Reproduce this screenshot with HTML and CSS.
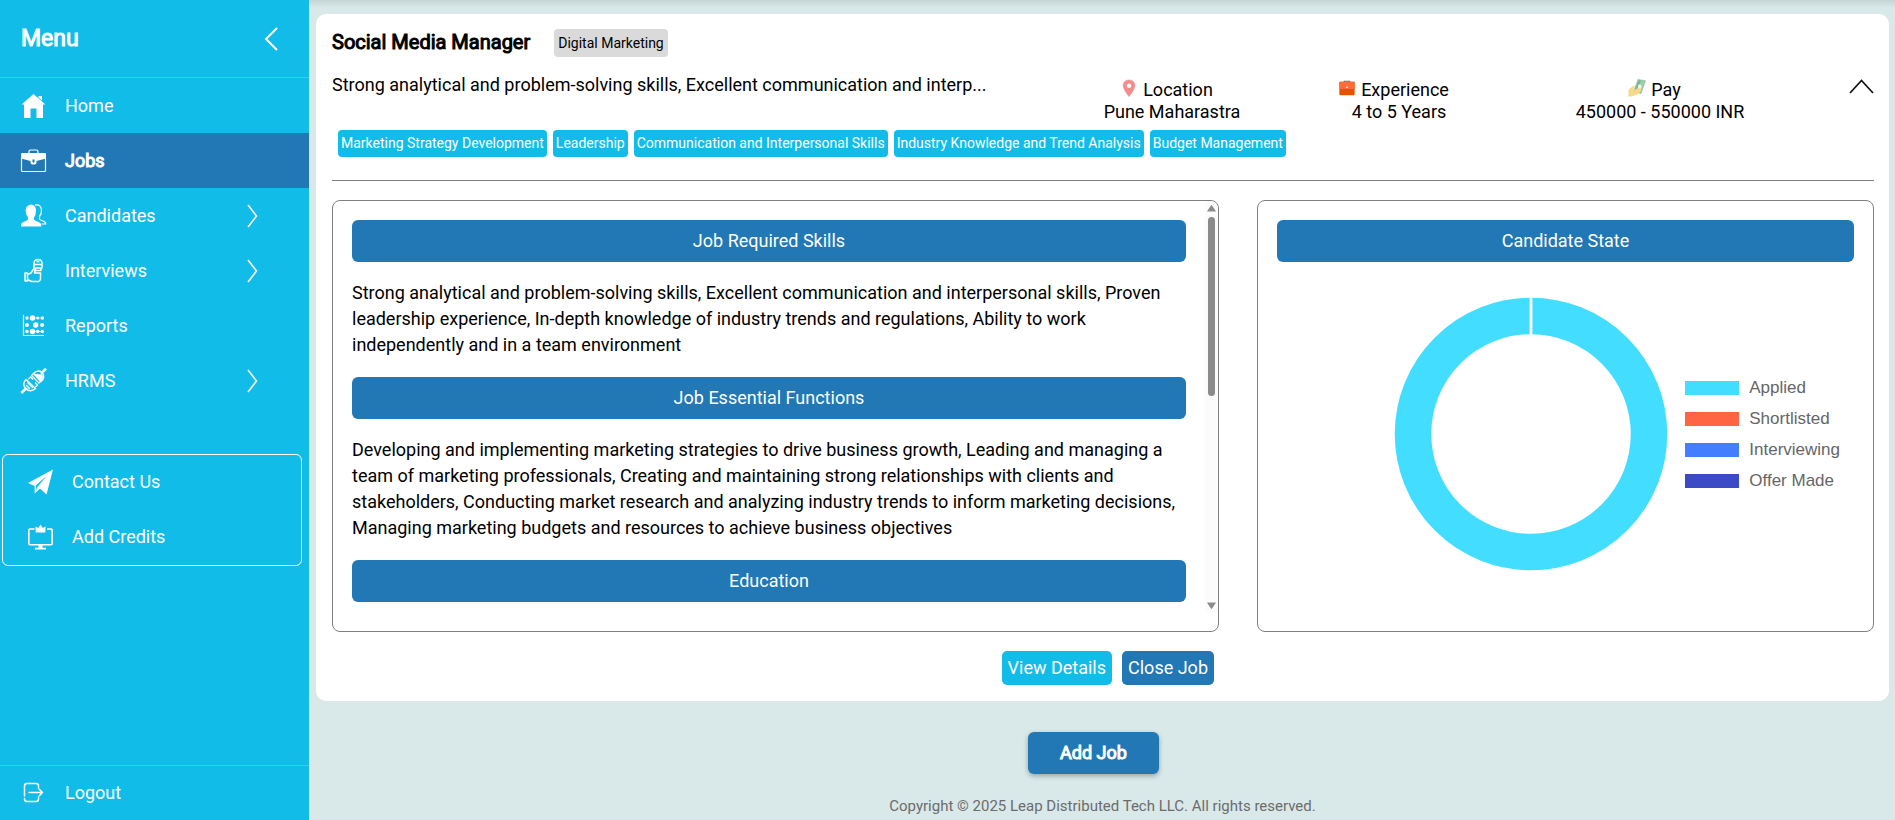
FILE: index.html
```html
<!DOCTYPE html>
<html lang="en">
<head>
<meta charset="utf-8">
<title>Jobs</title>
<link rel="stylesheet" href="styles.css">
</head>
<body>
<div class="app">
  <aside class="sidebar">
    <div class="sidebar-head">
      <h1 class="menu-title">Menu</h1>
      <button class="icon-btn" type="button" aria-label="Collapse menu">
        <svg width="14" height="24" viewBox="0 0 14 24" fill="none" stroke="#fff" stroke-width="2"><path d="M13 1 2 12l11 11"/></svg>
      </button>
    </div>
    <nav class="nav">
      <a class="nav-item" href="#">
        <svg class="nav-icon" viewBox="0 0 26 26" fill="#fff"><path d="M13 1 25 11.5H22.500V25H16V15.500H10V25H3.500V11.500H1Z"/><path d="M18 4.500V3h3.500v4.500Z"/></svg>
        <span>Home</span>
      </a>
      <a class="nav-item active" href="#">
        <svg class="nav-icon" viewBox="0 0 26 26" fill="none" stroke="#fff"><path d="M8.500 5V3.500Q8.500 2 10 2h6q1.500 0 1.500 1.500V5" stroke-width="1.200"/><path d="M1.500 5h23q1 0 1 1v4.500L16 13v1.500q0 2-3 2t-3-2V13L.5 10.500V6q0-1 1-1Z" fill="#fff" stroke="none"/><path d="M12 11.500h2v2.500l-1 1-1-1Z" fill="#2178b5" stroke="none"/><path d="M1 10v12.500q0 1 1 1h22q1 0 1-1V10" stroke-width="1.200"/></svg>
        <span>Jobs</span>
      </a>
      <a class="nav-item" href="#">
        <svg class="nav-icon" viewBox="0 0 26 26"><path d="M.5 23.500v-2q.5-2 3.500-3t3.500-2v-2Q5.500 12 5.200 8.500 5 2 10.500 1.500 15.500 2 15.500 7.500 15.500 12 13.500 14.500v2q1 1.200 4 2.200t3.300 3v1.800Z" fill="#fff"/><path d="M14.500 2.200q6-1.500 6.500 4.800.2 4-2 6.500v2.500q.8 1.200 3.500 2t2.700 3h-4" fill="none" stroke="#fff" stroke-width="1.200"/></svg>
        <span>Candidates</span>
        <svg class="chevron" viewBox="0 0 11 24" fill="none" stroke="#fff" stroke-width="1.600"><path d="m1 1 8.500 11L1 23"/></svg>
      </a>
      <a class="nav-item" href="#">
        <svg class="nav-icon" viewBox="0 0 26 26" fill="none" stroke="#fff" stroke-width="1.500" stroke-linejoin="round"><path d="M13.500 10V5.500q0-4 4-4t4 4V10Z"/><path d="M13.500 6.500h8M14.500 10v2.500h6V10M16 3.500h3"/><path d="M4.500 15H7v8H4.500ZM7 16.500l3.500-1.500 2.500-4q1.500-1 2 .5l-1 3.500h6v6q-.3 2-2 2.500h-7L7 21.500"/></svg>
        <span>Interviews</span>
        <svg class="chevron" viewBox="0 0 11 24" fill="none" stroke="#fff" stroke-width="1.600"><path d="m1 1 8.500 11L1 23"/></svg>
      </a>
      <a class="nav-item" href="#">
        <svg class="nav-icon" viewBox="0 0 26 26" fill="#fff"><path d="M3 2v20.500H23.500" fill="none" stroke="#fff" stroke-width="1.200"/><path d="M11.500 5h10M11.500 18.500h10" stroke="#fff" stroke-width=".6"/><circle cx="6.500" cy="5" r="1.700"/><circle cx="12" cy="5" r="2.700"/><circle cx="17.200" cy="5" r="1.500"/><circle cx="21.800" cy="5" r="1.700"/><circle cx="6.500" cy="12" r="2"/><circle cx="15.200" cy="12" r="2.700"/><circle cx="21.600" cy="12" r="2"/><circle cx="6.500" cy="18.500" r="1.700"/><circle cx="12" cy="18.500" r="2.700"/><circle cx="17.200" cy="18.500" r="1.700"/><circle cx="21.800" cy="18.500" r="1.700"/></svg>
        <span>Reports</span>
      </a>
      <a class="nav-item" href="#">
        <svg class="nav-icon" viewBox="0 0 26 26" fill="none" stroke="#fff" stroke-linejoin="round"><path d="M.8 25 6 20" stroke-width="2.500"/><path d="m20.500 5.500 5-4.800" stroke-width="2.500"/><path d="M5.500 11.500 15 20.500Q11 24 7 22L4 19q-2-3.500 1.500-7.500Z" stroke-width="1.500"/><path d="m7 14.500 5.500 5.500M5.500 17l4 4M8 11l2-2 2.500 2.500M15 19l2-2-2.500-2.500" stroke-width="1.300"/><path d="M13 5.500Q17 1.500 21 4l1.500 2Q24.500 10 20.500 13.500Z" stroke-width="1.500"/><path d="m14 6.500 7.500.5.500 4-1.500 2Z" fill="#fff"/><path d="m13 5.500-2 2 7.500 7.500 2-2" stroke-width="1.200"/></svg>
        <span>HRMS</span>
        <svg class="chevron" viewBox="0 0 11 24" fill="none" stroke="#fff" stroke-width="1.600"><path d="m1 1 8.500 11L1 23"/></svg>
      </a>
    </nav>
    <div class="support">
      <a class="nav-item" href="#">
        <svg class="nav-icon" viewBox="0 0 26 26" fill="#fff"><path d="M25.500.5 19 25.500l-6.500-6-5.300 5V17L.5 14Z"/><path d="M8.300 16.500 19.500 6.500 9.500 18.500l-1 3.500Z" fill="#12bce9"/></svg>
        <span>Contact Us</span>
      </a>
      <a class="nav-item" href="#">
        <svg class="nav-icon" viewBox="0 0 26 26" fill="#fff"><path d="M7 5H2.500Q1.300 5 1.300 6.200v13.300q0 1.200 1.200 1.200h21q1.200 0 1.200-1.200V6.200Q24.700 5 23.500 5H19.500" fill="none" stroke="#fff" stroke-width="1.600"/><path d="m8 2.500 2.800 1.500L13 .5 15.200 4 18 2.500 17.800 8.500H8.200ZM11 21h4v2.800h3.500v1.700h-11v-1.700H11Z"/></svg>
        <span>Add Credits</span>
      </a>
    </div>
    <a class="nav-item logout" href="#">
      <svg class="nav-icon" viewBox="0 0 26 26" fill="none" stroke="#fff" stroke-width="1.500" stroke-linecap="round" stroke-linejoin="round"><path d="M18 8V6q0-2.500-2.500-2.500h-9Q4 3.500 4 6v10M4 18.500v.5q0 2.500 2.500 2.500h9Q18 21.500 18 19v-2M8.500 12.500H22M18.800 9.200l3.200 3.300-3.200 3.300"/></svg>
      <span>Logout</span>
    </a>
  </aside>

  <main class="main">
    <article class="card">
      <header class="job-head">
        <h2 class="job-title">Social Media Manager</h2>
        <span class="category">Digital Marketing</span>
      </header>
      <div class="summary">
        <p class="excerpt">Strong analytical and problem-solving skills, Excellent communication and interp...</p>
        <div class="fact">
          <div class="fact-label">
            <svg class="fact-icon" viewBox="0 0 20 20"><path d="M10 1Q16.500 1.500 16.500 7.500 16 12 10 19.500 4 12 3.500 7.500 3.500 1.500 10 1Z" fill="#f78c8c" stroke="#e87575" stroke-width=".5"/><circle cx="10" cy="7.500" r="2.500" fill="#fff"/></svg>
            <span>Location</span>
          </div>
          <div>Pune Maharastra</div>
        </div>
        <div class="fact">
          <div class="fact-label">
            <svg class="fact-icon" viewBox="0 0 20 20"><path d="M7 4V2.500h6V4" fill="none" stroke="#666" stroke-width="1.300"/><rect x="1.500" y="3" width="17" height="15" rx="1" fill="#e65100"/><path d="M2.500 3h15q1 0 1 1v7h-17V4q0-1 1-1Z" fill="#ff6c3a"/><rect x="9" y="8.500" width="2" height="1.500" fill="#fff3d0"/></svg>
            <span>Experience</span>
          </div>
          <div>4 to 5 Years</div>
        </div>
        <div class="fact">
          <div class="fact-label">
            <svg class="fact-icon" viewBox="0 0 20 20"><path d="m11 .5 8.500 1.500-5 14-8-2Z" fill="#9fcdae" stroke="#7eb392" stroke-width=".6"/><path d="m12 1.500 2.500.5-5.500 12-2-1Z" fill="#7eb392"/><ellipse cx="13" cy="8.500" rx="2" ry="2.800" fill="#eef6ef"/><path d="M.5 12 6 7.500q2-.5 2 1l-2 3 1 1 3-2 3.500-.5q2 1 1 3L11 17l-5 1.500-2.500 1H.5Z" fill="#f8d98a"/></svg>
            <span>Pay</span>
          </div>
          <div>450000 - 550000 INR</div>
        </div>
        <button class="icon-btn toggle" type="button" aria-label="Collapse job">
          <svg width="25" height="15" viewBox="0 0 25 15" fill="none" stroke="#111" stroke-width="1.700"><path d="M1 14 12.500 1.500 24 14"/></svg>
        </button>
      </div>
      <ul class="skills">
        <li>Marketing Strategy Development</li>
        <li>Leadership</li>
        <li>Communication and Interpersonal Skills</li>
        <li>Industry Knowledge and Trend Analysis</li>
        <li>Budget Management</li>
      </ul>
      <hr class="divider">
      <div class="columns">
        <section class="panel details">
          <div class="details-text">
            <h3 class="bar">Job Required Skills</h3>
            <p class="copy">Strong analytical and problem-solving skills, Excellent communication and interpersonal skills, Proven leadership experience, In-depth knowledge of industry trends and regulations, Ability to work independently and in a team environment</p>
            <h3 class="bar">Job Essential Functions</h3>
            <p class="copy">Developing and implementing marketing strategies to drive business growth, Leading and managing a team of marketing professionals, Creating and maintaining strong relationships with clients and stakeholders, Conducting market research and analyzing industry trends to inform marketing decisions, Managing marketing budgets and resources to achieve business objectives</p>
            <h3 class="bar">Education</h3>
          </div>
          <div class="scrollbar" aria-hidden="true">
            <svg width="9" height="7" viewBox="0 0 9 7" fill="#8b8b8b"><path d="M4.500 0Q5 0 9 6.500H0Q4 0 4.500 0Z"/></svg>
            <span class="track"><span class="thumb"></span></span>
            <svg width="9" height="7" viewBox="0 0 9 7" fill="#8b8b8b"><path d="M4.500 7Q5 7 9 .5H0Q4 7 4.500 7Z"/></svg>
          </div>
        </section>
        <section class="panel state">
          <h3 class="bar">Candidate State</h3>
          <div class="chart">
            <svg class="donut" viewBox="0 0 274 274" role="img" aria-label="Candidates by state"><circle cx="137" cy="137" r="118" fill="none" stroke="#43deff" stroke-width="36.500"/><path d="M137 0v38" stroke="#fff" stroke-width="2.800"/></svg>
            <ul class="legend">
              <li><span class="swatch applied"></span>Applied</li>
              <li><span class="swatch shortlisted"></span>Shortlisted</li>
              <li><span class="swatch interviewing"></span>Interviewing</li>
              <li><span class="swatch offer"></span>Offer Made</li>
            </ul>
          </div>
        </section>
      </div>
      <div class="columns">
        <div class="actions">
          <button class="btn view" type="button">View Details</button>
          <button class="btn close" type="button">Close Job</button>
        </div>
      </div>
    </article>
    <button class="add-job" type="button">Add Job</button>
    <footer class="footer">Copyright © 2025 Leap Distributed Tech LLC. All rights reserved.</footer>
  </main>
</div>
</body>
</html>
```

FILE: styles.css
```css
* {
  box-sizing: border-box;
}

body {
  margin: 0;
  font-family: Roboto, "Liberation Sans", sans-serif;
  font-size: 18px;
  line-height: 22px;
  color: #000;
  background: #d9e8e8;
}

h1, h2, h3, p, ul {
  margin: 0;
  padding: 0;
  font-size: 18px;
  font-weight: 400;
}

ul {
  list-style: none;
}

button {
  border: 0;
  font: inherit;
  cursor: pointer;
}

svg {
  display: block;
  flex: none;
}

.app {
  display: flex;
  min-height: 100vh;
}

.icon-btn {
  display: flex;
  padding: 0;
  background: none;
}

/* Sidebar */

.sidebar {
  display: flex;
  flex-direction: column;
  flex: none;
  width: 309px;
  background: #12bce9;
  color: #fff;
}

.sidebar-head {
  display: flex;
  align-items: center;
  justify-content: space-between;
  height: 78px;
  padding: 0 31px 0 21px;
  border-bottom: 1px solid #41c9ed;
}

.menu-title {
  font-size: 23px;
  -webkit-text-stroke: 1px #fff;
}

.nav-item {
  display: flex;
  align-items: center;
  gap: 18px;
  height: 55px;
  padding: 0 51px 0 20px;
  color: #fff;
  text-decoration: none;
}

.nav-item.active {
  background: #2178b5;
  -webkit-text-stroke: 1px #fff;
}

.nav-icon {
  width: 27px;
  height: 26px;
}

.chevron {
  width: 11px;
  height: 24px;
  margin-left: auto;
}

.support {
  margin: 46px 7px 0 2px;
  border: 1px solid #fff;
  border-radius: 6px;
}

.support .nav-item {
  padding: 0 24px 2px;
}

.logout {
  margin-top: auto;
  border-top: 1px solid #41c9ed;
}

/* Main area */

.main {
  display: flex;
  flex-direction: column;
  flex: 1;
  min-width: 0;
  padding: 14px 6px 0 7px;
  background: linear-gradient(#c6d6d6, #d9e8e8 8px);
}

.card {
  padding: 15px 15px 16px 16px;
  border-radius: 10px;
  background: #fff;
}

.job-head {
  display: flex;
  align-items: center;
  gap: 24px;
}

.job-title {
  padding-bottom: 3px;
  font-size: 20px;
  line-height: 24px;
  -webkit-text-stroke: 1px #000;
}

.category {
  padding: 3px 4px;
  border-radius: 4px;
  background: #dadada;
  font-size: 14px;
}

.summary {
  display: grid;
  grid-template-columns: 726fr 228fr 226fr 296fr 66fr;
  padding-top: 22px;
}

.excerpt {
  margin-top: -5px;
}

.fact {
  text-align: center;
}

.fact-label {
  display: flex;
  justify-content: center;
  gap: 4px;
  padding-right: 12px;
}

.fact-icon {
  width: 20px;
  height: 18px;
}

.toggle {
  justify-self: end;
  align-self: start;
}

.skills {
  display: flex;
  gap: 6px;
  padding: 7px 6px 0;
}

.skills li {
  padding: 0 3px;
  border-radius: 4px;
  background: #12bce9;
  color: #fff;
  font-size: 14px;
  line-height: 27px;
}

.divider {
  height: 1px;
  margin: 23px 0 19px;
  border: 0;
  background: #808080;
}

.columns {
  display: grid;
  grid-template-columns: minmax(0, 887fr) minmax(0, 617fr);
  gap: 38px;
}

.panel {
  border: 1px solid #808080;
  border-radius: 8px;
}

.details {
  display: flex;
  padding-bottom: 19px;
}

.details-text {
  flex: 1;
  min-width: 0;
  padding: 19px 19px 10px;
}

.bar {
  border-radius: 6px;
  background: #2178b5;
  color: #fff;
  line-height: 42px;
  text-align: center;
}

.copy {
  padding: 18px 0 19px;
  line-height: 26px;
}

.scrollbar {
  display: flex;
  flex-direction: column;
  align-items: center;
  gap: 5px;
  width: 13px;
  padding: 4px 0 3px;
  border-top-right-radius: 8px;
  background: #fbfbfb;
}

.track {
  flex: 1;
  width: 7px;
}

.thumb {
  display: block;
  height: 47%;
  border-radius: 4px;
  background: #8b8b8b;
}

.state {
  display: flex;
  flex-direction: column;
  padding: 19px;
}

.chart {
  display: flex;
  align-items: center;
  justify-content: flex-end;
  flex: 1;
  gap: 17px;
  padding-right: 14px;
  padding-bottom: 6px;
}

.donut {
  width: 274px;
  height: 274px;
}

.legend {
  display: grid;
  gap: 9px;
  font-family: "Liberation Sans", Arial, sans-serif;
  font-size: 17px;
  color: #666;
}

.legend li {
  display: flex;
  align-items: center;
  gap: 10px;
}

.swatch {
  width: 54px;
  height: 14px;
}

.applied {
  background: #43deff;
}

.shortlisted {
  background: #ff6543;
}

.interviewing {
  background: #437eff;
}

.offer {
  background: #3c4bc5;
}

.actions {
  display: flex;
  justify-content: flex-end;
  gap: 10px;
  padding: 19px 5px 0 0;
}

.btn {
  padding: 6px;
  border-radius: 5px;
  color: #fff;
}

.view {
  background: #12bce9;
}

.close {
  background: #2178b5;
}

.add-job {
  align-self: center;
  margin: 31px 18px 0 0;
  padding: 10px 32px;
  border-radius: 6px;
  background: #2178b5;
  color: #fff;
  box-shadow: 0 2px 5px rgba(0, 0, 0, 0.3);
  -webkit-text-stroke: 1px #fff;
}

.footer {
  margin-top: 21px;
  color: #6c6c6c;
  font-size: 15px;
  text-align: center;
}
```
